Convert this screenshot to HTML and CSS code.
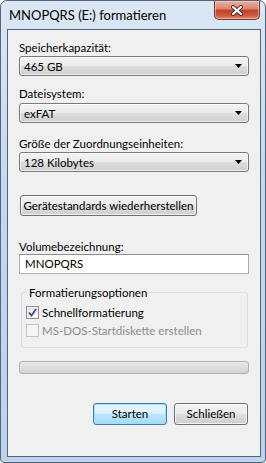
FILE: index.html
```html
<!DOCTYPE html>
<html lang="de">

<head>
    <meta charset="UTF-8">
    <title>MNOPQRS (E:) formatieren</title>
    <link rel="stylesheet" href="styles.css">
</head>

<body>
    <div class="window">
        <div class="titlebar">
            <span class="title">MNOPQRS (E:) formatieren</span>
            <div class="close">
                <svg width="14" height="11" viewBox="0 0 14 11">
                    <path d="M3 2 L11 9 M11 2 L3 9" stroke="#4a2a26" stroke-width="4" stroke-linecap="round" fill="none" />
                    <path d="M3 2 L11 9 M11 2 L3 9" stroke="#ffffff" stroke-width="2.2" stroke-linecap="round" fill="none" />
                </svg>
            </div>
        </div>
        <div class="client">
            <div class="label first">Speicherkapazität:</div>
            <div class="combo c1">
                <span>465 GB</span>
                <svg class="arrow" width="7" height="4" viewBox="0 0 7 4"><path d="M0 0 H7 L3.5 4 Z" fill="#000" /></svg>
            </div>

            <div class="label l2">Dateisystem:</div>
            <div class="combo c2">
                <span>exFAT</span>
                <svg class="arrow" width="7" height="4" viewBox="0 0 7 4"><path d="M0 0 H7 L3.5 4 Z" fill="#000" /></svg>
            </div>

            <div class="label l3">Größe der Zuordnungseinheiten:</div>
            <div class="combo c3">
                <span>128 Kilobytes</span>
                <svg class="arrow" width="7" height="4" viewBox="0 0 7 4"><path d="M0 0 H7 L3.5 4 Z" fill="#000" /></svg>
            </div>

            <button class="btn reset">Gerätestandards wiederherstellen</button>

            <div class="label l4">Volumebezeichnung:</div>
            <div class="textbox">MNOPQRS</div>

            <fieldset class="group">
                <legend>Formatierungsoptionen</legend>
                <div class="check-row">
                    <span class="checkbox">
                        <svg width="9" height="9" viewBox="0 0 9 9"><path d="M1 4.5 L3.5 7.5 L8 1" stroke="#3c4f8a" stroke-width="1.8" fill="none" /></svg>
                    </span>
                    <span>Schnellformatierung</span>
                </div>
                <div class="check-row disabled">
                    <span class="checkbox"></span>
                    <span>MS-DOS-Startdiskette erstellen</span>
                </div>
            </fieldset>

            <div class="progress"></div>

            <div class="actions">
                <button class="btn default">Starten</button>
                <button class="btn">Schließen</button>
            </div>
        </div>
    </div>
</body>

</html>
```

FILE: styles.css
```css
body {
    margin: 0;
    font-family: Lato, "Open Sans", sans-serif;
    font-size: 11.5px;
    color: #000;
    background: #fff;
}

.window {
    width: 266px;
    height: 463px;
    box-sizing: border-box;
    border: 1px solid #55657a;
    border-radius: 7px 7px 4px 4px;
    background: linear-gradient(180deg, #dbe7f5 0%, #c4d8ef 40%, #bcd3ed 100%);
    display: flex;
    flex-direction: column;
    overflow: hidden;
}

.titlebar {
    height: 28px;
    display: flex;
    justify-content: space-between;
    align-items: flex-start;
    flex-shrink: 0;
}

.title {
    padding: 6px 0 0 8px;
    font-size: 13px;
    line-height: 16px;
    color: #000;
}

.close {
    width: 44px;
    height: 18px;
    margin-right: 5px;
    border: 1px solid #6d3a33;
    border-top: none;
    border-radius: 0 0 5px 5px;
    background: linear-gradient(180deg, #e9b1a3 0%, #d9826d 45%, #c2402a 50%, #cf5a3f 80%, #e08b6c 100%);
    display: flex;
    align-items: center;
    justify-content: center;
    box-shadow: inset 0 0 0 1px rgba(255, 220, 210, 0.5);
}

.client {
    flex: 1;
    margin: 0 4px 5px 6px;
    border: 1px solid #52647a;
    background: #f0f0f0;
    padding: 10px 11px 0 11px;
    display: flex;
    flex-direction: column;
}

.label {
    line-height: 15px;
    height: 15px;
    white-space: nowrap;
}

.label.first {
    margin-bottom: 1px;
}

.l2 {
    margin-top: 10px;
    margin-bottom: 2px;
}

.l3 {
    margin-top: 13px;
    margin-bottom: 1px;
}

.l4 {
    margin-top: 23px;
}

.combo {
    height: 20px;
    box-sizing: border-box;
    border: 1px solid #7a7a7a;
    border-radius: 3px;
    background: linear-gradient(180deg, #f3f3f3 0%, #ebebeb 48%, #dddddd 52%, #cfcfcf 100%);
    box-shadow: inset 0 0 0 1px rgba(255, 255, 255, 0.6);
    display: flex;
    align-items: center;
    justify-content: space-between;
    padding: 0 6px 0 4px;
}

.arrow {
    flex-shrink: 0;
}

.btn {
    font-family: inherit;
    font-size: 11.5px;
    color: #000;
    height: 22px;
    box-sizing: border-box;
    border: 1px solid #707070;
    border-radius: 3px;
    background: linear-gradient(180deg, #f2f2f2 0%, #ebebeb 48%, #dddddd 52%, #cfcfcf 100%);
    box-shadow: inset 0 0 0 1px rgba(255, 255, 255, 0.7);
    padding: 0;
    line-height: 18px;
    white-space: nowrap;
}

.reset {
    margin-top: 23px;
    margin-left: 1px;
    width: 177px;
    height: 21px;
}

.textbox {
    height: 20px;
    box-sizing: border-box;
    border: 1px solid #abadb3;
    border-top-color: #8b8d93;
    background: #fff;
    padding: 0 5px;
    line-height: 18px;
}

.group {
    margin: 11px 1px 0 2px;
    padding: 3px 4px 8px 4px;
    border: 1px solid #d5dfe5;
    border-radius: 3px;
    min-width: 0;
}

.group legend {
    padding: 0 2px;
    margin-left: 1px;
    line-height: 15px;
}

.check-row {
    display: flex;
    align-items: center;
    gap: 3px;
    height: 18px;
    white-space: nowrap;
}

.checkbox {
    width: 13px;
    height: 13px;
    box-sizing: border-box;
    border: 1px solid #8e8f8f;
    background: linear-gradient(135deg, #dcdcdc 0%, #f4f4f4 60%, #ffffff 100%);
    box-shadow: inset 0 0 0 1px #f4f4f4;
    display: flex;
    align-items: center;
    justify-content: center;
}

.disabled {
    color: #8d8d8d;
}

.disabled .checkbox {
    border-color: #c4c4c4;
    background: #f4f4f4;
}

.progress {
    margin-top: 13px;
    height: 13px;
    box-sizing: border-box;
    border: 1px solid #b2b2b2;
    border-radius: 3px;
    background: linear-gradient(180deg, #e8e8e8 0%, #dedede 50%, #d3d3d3 100%);
}

.actions {
    margin-top: 29px;
    display: flex;
    justify-content: flex-end;
    gap: 7px;
    padding-right: 1px;
}

.actions .btn {
    width: 74px;
}

.default {
    border-color: #3c7fb1;
    background: linear-gradient(180deg, #eaf6fd 0%, #d9f0fc 48%, #bee6fd 52%, #a7d9f5 100%);
    box-shadow: inset 0 0 0 1px #9fe0fd;
}
```
